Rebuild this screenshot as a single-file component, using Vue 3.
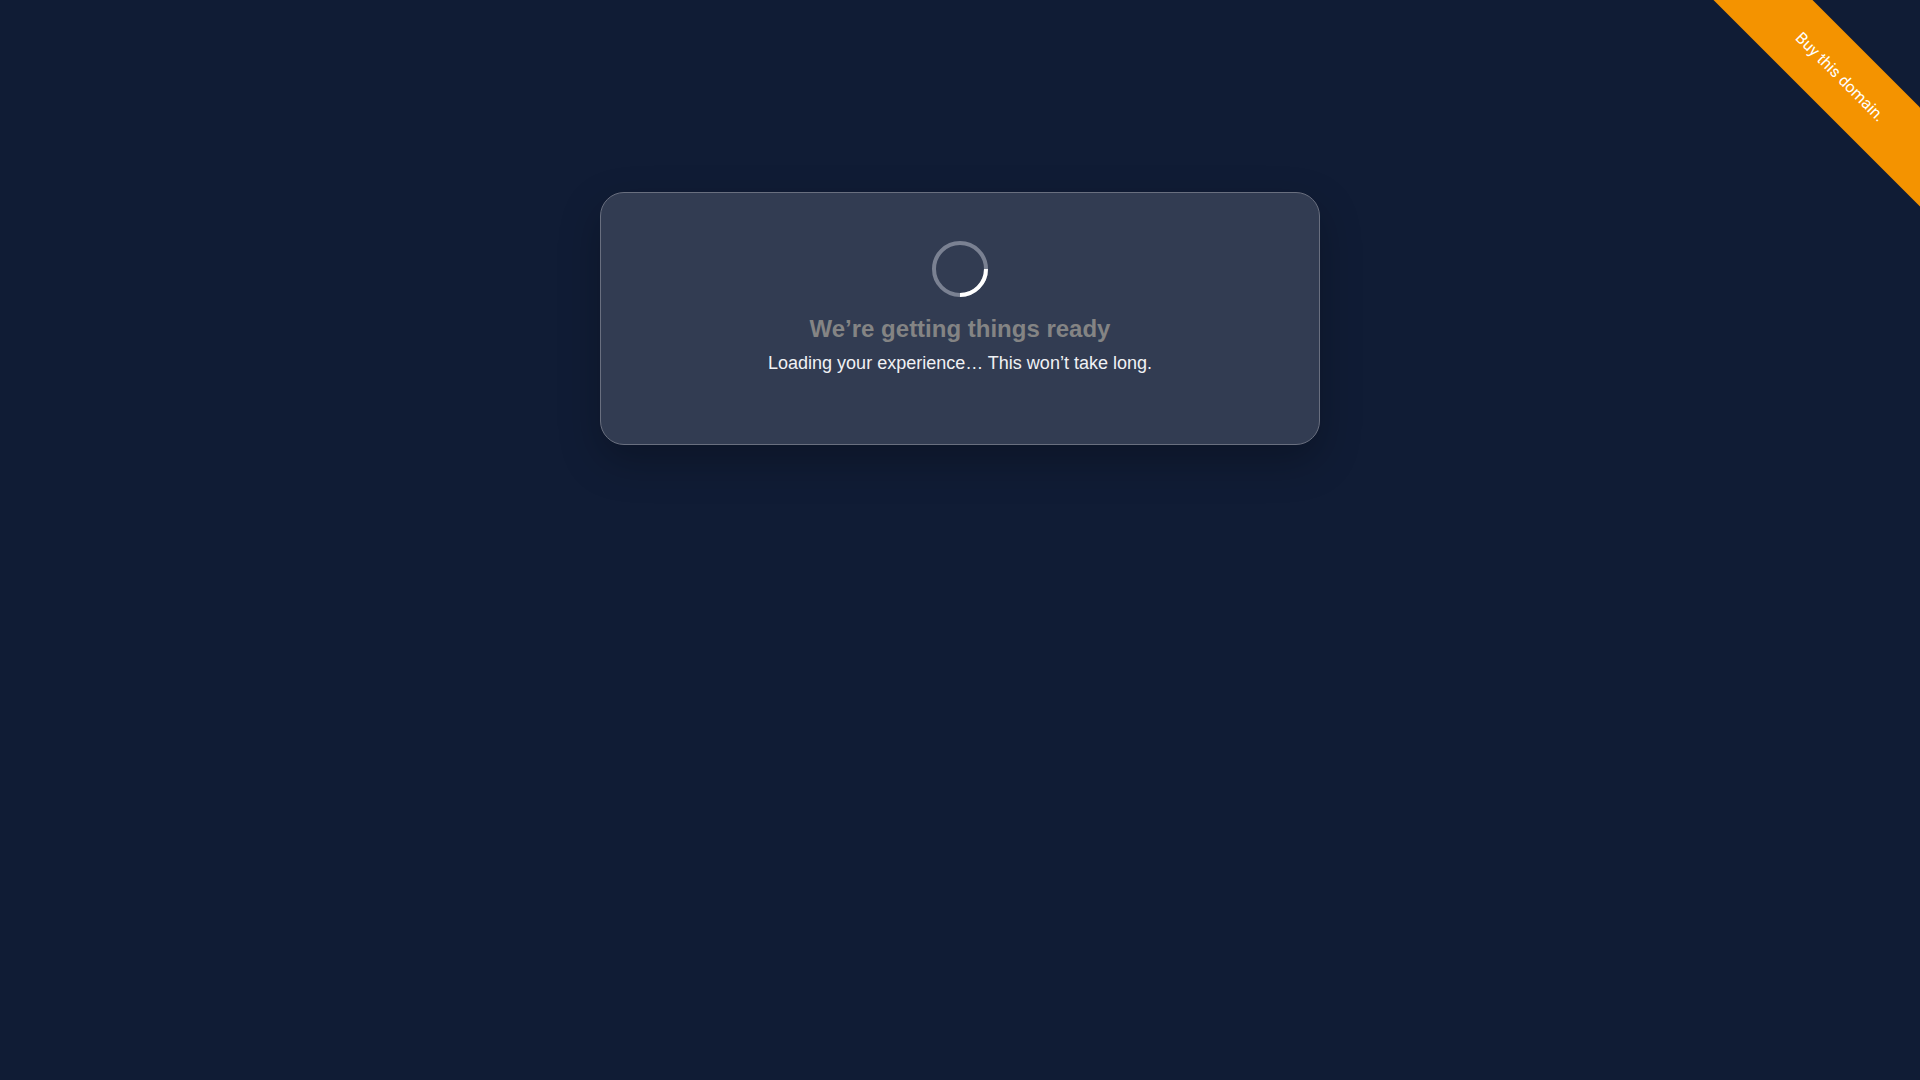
<script setup>
const title = 'We’re getting things ready'
const message = 'Loading your experience… This won’t take long.'
</script>

<template>
  <div class="page">
    <div class="corner">
      <a class="ribbon" href="#">Buy this domain.</a>
    </div>
    <main class="card" role="status" aria-live="polite">
      <div class="spinner" aria-hidden="true"></div>
      <h1 class="title">{{ title }}</h1>
      <p class="message">{{ message }}</p>
    </main>
  </div>
</template>

<style>
body {
  margin: 0;
  background: #101c35;
}
</style>

<style scoped>
.page {
  box-sizing: border-box;
  min-height: 100vh;
  padding: 192px 24px 48px;
  font-family: "Liberation Sans", Arial, sans-serif;
}

.card {
  box-sizing: border-box;
  max-width: 720px;
  margin: 0 auto;
  padding: 48px 48px 67px;
  display: flex;
  flex-direction: column;
  align-items: center;
  text-align: center;
  background: #323c52;
  border: 1px solid #696f7f;
  border-radius: 24px;
  box-shadow: 0 16px 40px rgba(0, 0, 0, 0.25);
}

.spinner {
  box-sizing: border-box;
  width: 56px;
  height: 56px;
  border: 4px solid #7a8192;
  border-radius: 50%;
  position: relative;
}

.spinner::after {
  content: "";
  position: absolute;
  inset: -4px;
  border: 4px solid #fff;
  border-radius: 50%;
  clip-path: inset(50% 0 0 50%);
}

.title {
  margin: 16px 0 5px;
  font-size: 24px;
  line-height: 32px;
  font-weight: 700;
  color: #848484;
}

.message {
  margin: 0;
  font-size: 18px;
  line-height: 27px;
  color: #f0f1f4;
}

.corner {
  position: absolute;
  top: 0;
  right: 0;
  width: 240px;
  height: 240px;
  overflow: hidden;
}

.ribbon {
  position: absolute;
  top: 42px;
  right: -120px;
  width: 400px;
  line-height: 70px;
  background: #f49300;
  color: #fff;
  font-family: Roboto, sans-serif;
  font-size: 16px;
  text-align: center;
  text-decoration: none;
  transform: rotate(45deg);
}
</style>
